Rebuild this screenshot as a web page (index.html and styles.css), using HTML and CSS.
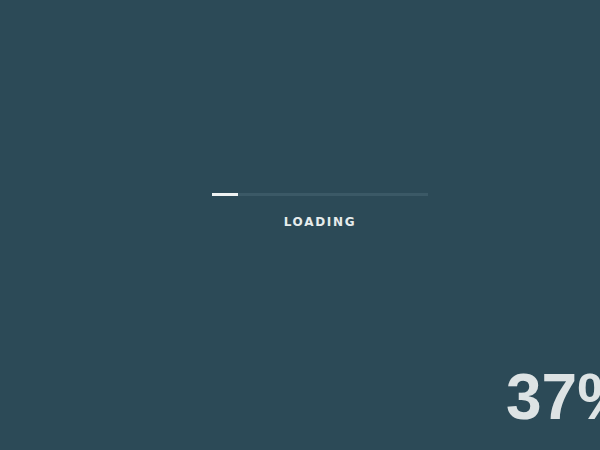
FILE: index.html
```html
<!DOCTYPE html>
<html>
<head>
<meta charset="utf-8">
<link rel="stylesheet" href="styles.css">
</head>
<body>
<div class="stage">
  <div class="loader">
    <div class="track"><div class="fill" style="width:12%"></div></div>
    <div class="label">LOADING</div>
  </div>
  <div class="percent">37%</div>
</div>
</body>
</html>
```
FILE: styles.css
```css
html, body {
  margin: 0;
  padding: 0;
  background: #2c4a57;
  overflow: hidden;
}
.stage {
  position: relative;
  width: 600px;
  height: 450px;
  overflow: hidden;
}
.loader {
  width: 216px;
  margin-left: 212px;
  padding-top: 193px;
}
.track {
  height: 3px;
  background: #3b5966;
}
.fill {
  height: 100%;
  background: #eef2f2;
}
.label {
  margin-top: 19px;
  text-align: center;
  font-family: "DejaVu Sans", sans-serif;
  font-weight: bold;
  font-size: 12px;
  letter-spacing: 1.7px;
  color: #e6ecec;
}
.percent {
  position: absolute;
  left: 506px;
  top: 360px;
  font-family: "Liberation Sans", Arial, sans-serif;
  font-weight: bold;
  font-size: 64px;
  color: #dde3e4;
  white-space: nowrap;
}
```
